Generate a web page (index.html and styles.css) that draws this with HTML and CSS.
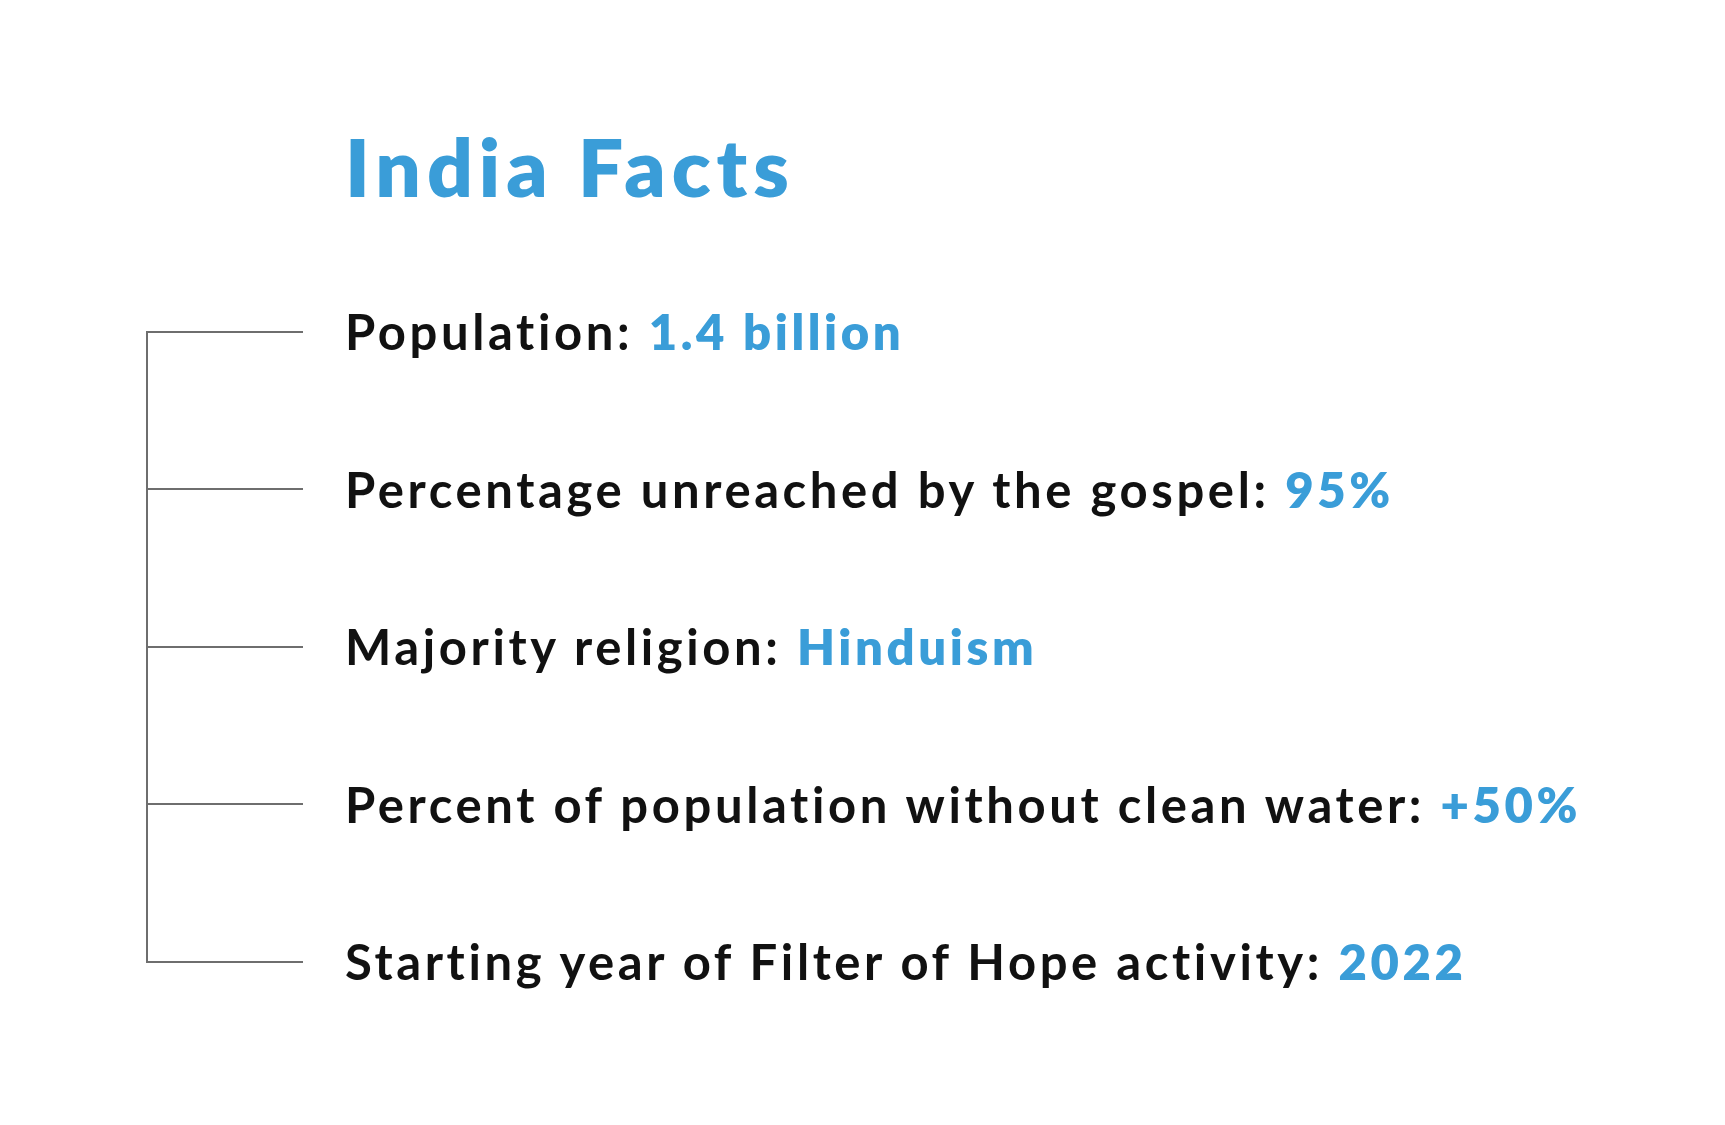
FILE: index.html
```html
<!DOCTYPE html>
<html lang="en">
<head>
<meta charset="utf-8">
<title>India Facts</title>
<link rel="stylesheet" href="styles.css">
</head>
<body>
<main class="page">
  <h1 class="title">India Facts</h1>
  <ul class="facts">
    <li class="fact"><span class="connector"></span><p class="fact-text">Population: <strong class="value">1.4 billion</strong></p></li>
    <li class="fact"><span class="connector"></span><p class="fact-text">Percentage unreached by the gospel: <strong class="value">95%</strong></p></li>
    <li class="fact"><span class="connector"></span><p class="fact-text">Majority religion: <strong class="value">Hinduism</strong></p></li>
    <li class="fact"><span class="connector"></span><p class="fact-text">Percent of population without clean water: <strong class="value">+50%</strong></p></li>
    <li class="fact"><span class="connector"></span><p class="fact-text">Starting year of Filter of Hope activity: <strong class="value">2022</strong></p></li>
  </ul>
</main>
</body>
</html>
```

FILE: styles.css
```css
html, body {
  margin: 0;
  padding: 0;
  background: #ffffff;
}

body {
  font-family: "Lato", "Open Sans", "Liberation Sans", sans-serif;
  color: #111111;
}

.page {
  padding: 118px 0 0 146px;
}

.title {
  margin: 0 0 39px 199px;
  font-size: 80px;
  line-height: 1.2;
  font-weight: 800;
  letter-spacing: 6px;
  color: #3a9dd8;
}

.facts {
  list-style: none;
  margin: 0;
  padding: 0;
  background-image: linear-gradient(#6e6e6e, #6e6e6e);
  background-repeat: no-repeat;
  background-size: 2px calc(100% - 157.5px);
  background-position: 0 center;
}

.fact {
  display: flex;
  align-items: center;
  height: 157.5px;
}

.connector {
  flex: 0 0 157px;
  height: 2px;
  background: #6e6e6e;
}

.fact-text {
  margin: 0 0 0 42px;
  font-size: 49px;
  line-height: 1.2;
  font-weight: 700;
  letter-spacing: 3.6px;
  white-space: nowrap;
}

.value {
  font-weight: 800;
  color: #3a9dd8;
}
```
